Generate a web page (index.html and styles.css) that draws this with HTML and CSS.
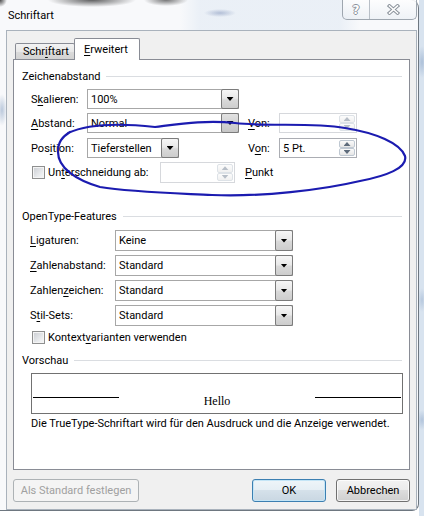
FILE: index.html
```html
<!DOCTYPE html>
<html lang="de">
<head>
<meta charset="utf-8">
<title>Schriftart</title>
<link rel="stylesheet" href="styles.css">
</head>
<body>
<div class="window">
  <header class="titlebar">
    <span class="title">Schriftart</span>
    <div class="caption">
      <span class="cap help"><span class="help-glyph">?</span></span>
      <span class="cap close">
        <svg width="13" height="11" viewBox="0 0 13 11">
          <path d="M2.5 2 L10.5 9 M10.5 2 L2.5 9" stroke="#8b929b" stroke-width="3.6" stroke-linecap="square" fill="none"/>
          <path d="M2.5 2 L10.5 9 M10.5 2 L2.5 9" stroke="#fdfdfd" stroke-width="1.6" stroke-linecap="square" fill="none"/>
        </svg>
      </span>
    </div>
  </header>

  <main class="client">
    <nav class="tabs">
      <span class="tab">Schr<u>i</u>ftart</span>
      <span class="tab active"><u>E</u>rweitert</span>
    </nav>

    <div class="panel">
      <section class="group">
        <h2 class="group-head"><span>Zeichenabstand</span><i class="rule"></i></h2>
        <div class="rows spacing">
          <div class="row">
            <label class="lbl">S<u>k</u>alieren:</label>
            <div class="combo w152"><span class="val">100%</span><span class="drop"><i class="tri"></i></span></div>
          </div>
          <div class="row">
            <label class="lbl"><u>A</u>bstand:</label>
            <div class="combo w152"><span class="val">Normal</span><span class="drop dim"><i class="tri"></i></span></div>
            <label class="lbl-von"><u>V</u>on:</label>
            <div class="spin disabled w78"><span class="val"></span><span class="arrows"><span class="arr"><i class="up"></i></span><span class="arr"><i class="down"></i></span></span></div>
          </div>
          <div class="row r3">
            <label class="lbl">Pos<u>i</u>tion:</label>
            <div class="combo w92"><span class="val">Tieferstellen</span><span class="drop"><i class="tri"></i></span></div>
            <label class="lbl-von">V<u>o</u>n:</label>
            <div class="spin w78"><span class="val">5 Pt.</span><span class="arrows"><span class="arr"><i class="up"></i></span><span class="arr"><i class="down"></i></span></span></div>
          </div>
          <div class="row r4">
            <span class="check"></span>
            <label class="check-lbl wide">Un<u>t</u>erschneidung ab:</label>
            <div class="spin disabled w75"><span class="val"></span><span class="arrows"><span class="arr"><i class="up"></i></span><span class="arr"><i class="down"></i></span></span></div>
            <label class="unit"><u>P</u>unkt</label>
          </div>
        </div>
      </section>

      <section class="group ot">
        <h2 class="group-head"><span>OpenType-Features</span><i class="rule"></i></h2>
        <div class="rows features">
          <div class="row tall">
            <label class="lbl-ot"><u>L</u>igaturen:</label>
            <div class="combo w178"><span class="val">Keine</span><span class="drop"><i class="tri"></i></span></div>
          </div>
          <div class="row tall">
            <label class="lbl-ot"><u>Z</u>ahlenabstand:</label>
            <div class="combo w178"><span class="val">Standard</span><span class="drop"><i class="tri"></i></span></div>
          </div>
          <div class="row tall">
            <label class="lbl-ot">Zahlen<u>z</u>eichen:</label>
            <div class="combo w178"><span class="val">Standard</span><span class="drop"><i class="tri"></i></span></div>
          </div>
          <div class="row tall">
            <label class="lbl-ot">S<u>t</u>il-Sets:</label>
            <div class="combo w178"><span class="val">Standard</span><span class="drop"><i class="tri"></i></span></div>
          </div>
          <div class="row check-row">
            <span class="check"></span>
            <label class="check-lbl">Kontext<u>v</u>arianten verwenden</label>
          </div>
        </div>
      </section>

      <section class="group preview-group">
        <h2 class="group-head"><span>Vorschau</span><i class="rule"></i></h2>
        <div class="preview">
          <i class="baseline left"></i>
          <span class="sample">Hello</span>
          <i class="baseline right"></i>
        </div>
        <p class="note">Die TrueType-Schriftart wird für den Ausdruck und die Anzeige verwendet.</p>
      </section>
    </div>

    <div class="btnrow">
      <button class="btn std" disabled>Als Standard festlegen</button>
      <button class="btn ok">OK</button>
      <button class="btn cancel">Abbrechen</button>
    </div>
  </main>
</div>

<svg class="ink" width="424" height="516" viewBox="0 0 424 516">
  <path d="M68 133 C 92 122 128 124 155 127 C 180 124 205 120 235 123 C 270 127 310 122 345 128 C 376 133 400 143 405 156 C 408 168 386 176 360 181 C 322 190 262 197 212 195 C 170 193 130 192 100 187 C 76 180 58 168 58 152 C 58 142 62 137 70 132"
        fill="none" stroke="#1b1bb0" stroke-width="2.2" stroke-linecap="round" stroke-linejoin="round"/>
</svg>
</body>
</html>
```

FILE: styles.css
```css
* { box-sizing: border-box; }

html, body { margin: 0; padding: 0; }

body {
  position: relative;
  width: 424px;
  height: 516px;
  overflow: hidden;
  font-family: Roboto, "Noto Sans", sans-serif;
  font-size: 11px;
  line-height: 15px;
  color: #000;
  background:
    radial-gradient(ellipse 5px 16px at 422px 62px, rgba(120, 150, 190, .45), transparent),
    radial-gradient(ellipse 4px 12px at 422px 300px, rgba(120, 150, 190, .35), transparent),
    radial-gradient(ellipse 5px 10px at 422px 420px, rgba(120, 150, 190, .4), transparent),
    linear-gradient(90deg, #fff 0, #fff 419px, #d8e3ef 419px);
}

/* window frame (glass) */
.window {
  width: 419px;
  height: 511px;
  display: flex;
  flex-direction: column;
  padding: 0 1px 0 6px;
  border-right: 1px solid #6e7780;
  border-bottom: 1px solid #6e7780;
  border-radius: 0 8px 7px 0;
  background:
    radial-gradient(ellipse 5px 16px at 2px 110px, rgba(110, 140, 180, .45), transparent),
    radial-gradient(ellipse 44px 7px at 92px 0, rgba(30, 30, 30, .7), transparent),
    radial-gradient(ellipse 22px 6px at 166px 0, rgba(30, 30, 30, .6), transparent),
    radial-gradient(ellipse 7px 7px at 0 0, rgba(30, 30, 30, .8), transparent),
    radial-gradient(ellipse 16px 4px at 220px 13px, rgba(110, 130, 175, .45), transparent),
    linear-gradient(90deg, rgba(255, 255, 255, 0) 180px, rgba(214, 226, 240, .4) 200px, rgba(214, 226, 240, .4) 340px, rgba(255, 255, 255, 0) 360px),
    #f8f9fb;
}

.titlebar {
  height: 30px;
  flex: none;
  display: flex;
  align-items: flex-start;
  padding-left: 2px;
}

.title { margin-top: 8px; }

.caption {
  margin-left: auto;
  display: flex;
  height: 20px;
  border: 1px solid #9ea6af;
  border-top: none;
  border-radius: 0 0 5px 5px;
  background: linear-gradient(rgba(255, 255, 255, .7), rgba(232, 237, 243, .6));
}

.cap {
  display: flex;
  align-items: center;
  justify-content: center;
}

.help {
  width: 27px;
  border-right: 1px solid #b8bfc7;
}

.help-glyph {
  font-family: "DejaVu Sans", sans-serif;
  font-weight: bold;
  font-size: 12px;
  line-height: 12px;
  color: #fff;
  text-shadow: 1px 0 #8b929b, -1px 0 #8b929b, 0 1px #8b929b, 0 -1px #8b929b;
}

.close { width: 46px; }

/* client area */
.client {
  height: 480px;
  flex: none;
  background: #f0f0f0;
  border: 1px solid #a9b2bc;
  padding: 7px 6px;
  display: flex;
  flex-direction: column;
}

.tabs {
  display: flex;
  align-items: flex-end;
  height: 22px;
  margin-bottom: -1px;
  position: relative;
  z-index: 1;
}

.tab {
  height: 16px;
  width: 60px;
  margin-left: 2px;
  margin-bottom: 1px;
  padding: 0 0 0 7px;
  border: 1px solid #898c95;
  border-bottom: none;
  border-radius: 2px 2px 0 0;
  background: linear-gradient(#f3f3f3, #e8e8e8 50%, #dbdbdb 51%, #d3d3d3);
  line-height: 15px;
}

.tab.active {
  height: 22px;
  width: 66px;
  margin-left: -1px;
  margin-bottom: 0;
  padding: 3px 0 0 9px;
  background: #fff;
}

u {
  text-decoration-thickness: 1px;
  text-underline-offset: 2px;
}

.panel {
  height: 411px;
  flex: none;
  background: #fff;
  border: 1px solid #898c95;
  padding: 9px 7px 0 8px;
}

.group-head {
  margin: 0;
  height: 15px;
  display: flex;
  align-items: center;
  gap: 6px;
  font-size: 11px;
  font-weight: normal;
  line-height: 15px;
}

.rule {
  flex: 1;
  height: 1px;
  margin-top: -1px;
  background: #dadde1;
}

.rows {
  display: flex;
  flex-direction: column;
  gap: 4px;
}

.spacing { margin-top: 5px; padding-left: 9px; }

.row {
  display: flex;
  align-items: center;
  height: 20px;
}

.r3 { margin-top: 1px; }
.r4 { height: 21px; }

.lbl { width: 56px; }
.lbl-von { width: 31px; margin-left: 9px; }
.lbl-ot { width: 85px; }

/* combo boxes */
.combo {
  display: flex;
  height: 100%;
  border: 1px solid #a7a7a7;
  background: #fff;
}

.w152 { width: 152px; }
.w92 { width: 92px; margin-right: 60px; }
.w178 { width: 178px; }

.combo .val {
  flex: 1;
  padding-left: 3px;
  align-self: center;
}

.drop {
  width: 18px;
  margin: -1px -1px -1px 0;
  border: 1px solid #7b7b7b;
  border-radius: 2px;
  background: linear-gradient(#f6f6f6, #e9e9e9 45%, #d9d9d9 55%, #cdcdcd);
  display: flex;
  align-items: center;
  justify-content: center;
}

.drop.dim {
  background: linear-gradient(#e2e2e2, #d3d3d3 50%, #c6c6c6);
}

.tri {
  width: 7px;
  height: 4px;
  background: #000;
  clip-path: polygon(0 0, 100% 0, 50% 100%);
}

/* spin boxes */
.spin {
  display: flex;
  height: 100%;
  border: 1px solid #abadb3;
  background: #fff;
}

.w78 { width: 78px; }
.w75 { width: 75px; }

.spin .val {
  flex: 1;
  padding-left: 3px;
  align-self: center;
}

.arrows {
  width: 16px;
  margin: 1px 1px 1px 0;
  display: flex;
  flex-direction: column;
}

.arr {
  flex: 1;
  border: 1px solid #bfc8d2;
  border-radius: 2px;
  background: linear-gradient(#fafafa, #e6e6e6);
  display: flex;
  align-items: center;
  justify-content: center;
}

.up, .down {
  width: 7px;
  height: 4px;
  background: #5e6b7b;
}

.up { clip-path: polygon(50% 0, 100% 100%, 0 100%); }
.down { clip-path: polygon(0 0, 100% 0, 50% 100%); }

.spin.disabled { border-color: #d6d8dc; }
.spin.disabled .arr { border-color: #dde2e7; background: linear-gradient(#fcfcfc, #f0f0f0); }
.spin.disabled .up, .spin.disabled .down { background: #b7bec7; }

/* check boxes */
.check {
  width: 13px;
  height: 13px;
  margin-left: 1px;
  border: 1px solid #8e8f8f;
  box-shadow: inset 0 0 0 1px #f4f4f4;
  background: linear-gradient(135deg, #c9ccd1, #eceef0 70%, #f6f6f6);
}

.check-lbl { margin-left: 3px; }
.check-lbl.wide { width: 112px; }

.unit { margin-left: 10px; }

/* OpenType section */
.ot { margin-top: 26px; }
.features { margin-top: 6px; padding-left: 8px; }
.row.tall { height: 21px; }
.check-row { height: 15px; }
.check-row .check { margin-left: 2px; }

/* preview */
.preview-group { margin-top: 8px; }

.preview {
  width: 372px;
  height: 41px;
  margin: 5px 0 0 9px;
  border: 1px solid #717171;
  display: flex;
  align-items: flex-start;
}

.baseline {
  width: 86px;
  height: 1px;
  margin-top: 23px;
  background: #000;
}

.baseline.left { margin-left: 1px; }
.baseline.right { margin-right: 1px; }

.sample {
  flex: 1;
  text-align: center;
  padding-top: 21px;
  font-family: "Liberation Serif", serif;
  font-size: 12px;
  line-height: 13px;
}

.note {
  margin: 2px 0 0 9px;
}

/* dialog buttons */
.btnrow {
  display: flex;
  gap: 10px;
  height: 23px;
  margin-top: 9px;
}

.btn {
  height: 100%;
  padding: 0;
  font: inherit;
  color: #000;
  border: 1px solid #707070;
  border-radius: 3px;
  background: linear-gradient(#f2f2f2, #ebebeb 49%, #dddddd 50%, #cfcfcf);
  box-shadow: inset 0 0 0 1px rgba(255, 255, 255, .75);
}

.btn.std {
  width: 126px;
  color: #a0a0a0;
  border-color: #adb2b5;
  background: #f4f4f4;
  box-shadow: none;
}

.btn.ok {
  width: 74px;
  margin-left: auto;
  border-color: #3c7fb1;
  box-shadow: inset 0 0 0 1px #c4e5f6;
  background: linear-gradient(#eef5f9, #e5eef4 49%, #d5e1ea 50%, #c9d7e2);
}

.btn.cancel { width: 74px; }

/* pen annotation drawn over the dialog */
.ink {
  position: absolute;
  left: 0;
  top: 0;
  pointer-events: none;
}
```
